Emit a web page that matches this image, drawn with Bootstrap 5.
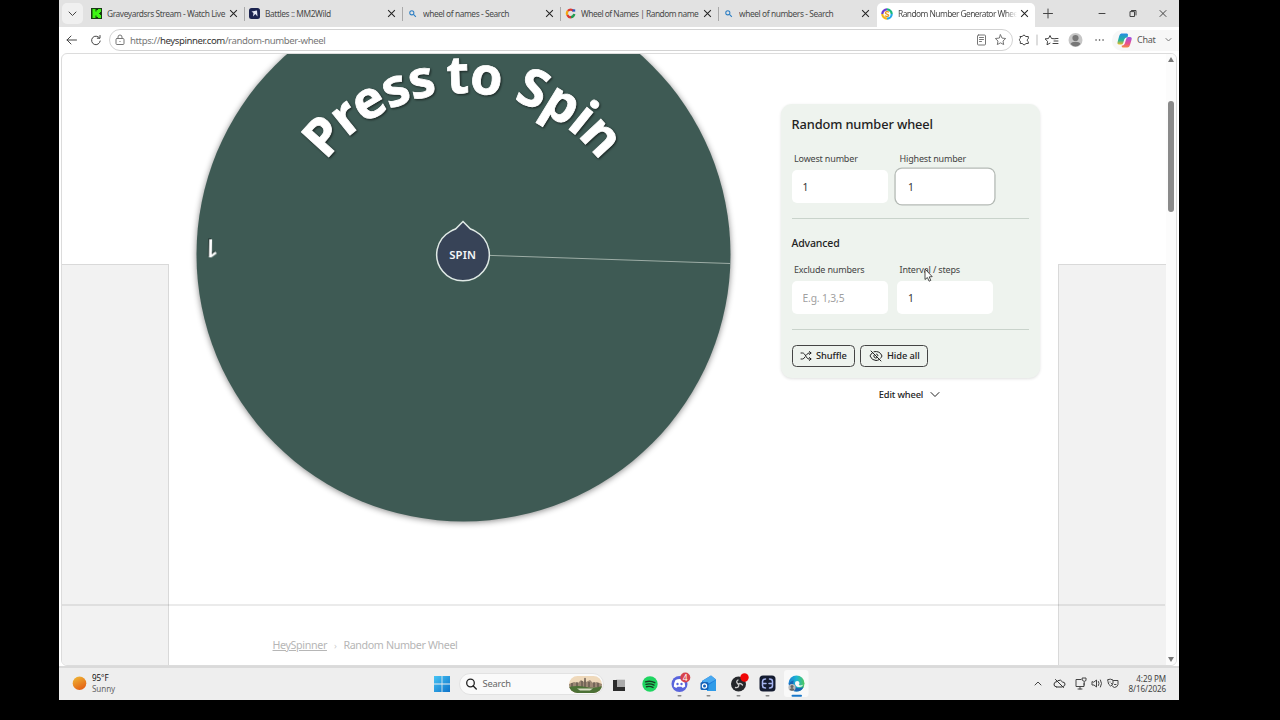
<!DOCTYPE html>
<html lang="en">
<head>
<meta charset="utf-8">
<title>Random Number Generator Wheel</title>
<link href="https://cdn.jsdelivr.net/npm/bootstrap@5.3.0/dist/css/bootstrap.min.css" rel="stylesheet">
<style>
body{background:#000;font-family:"Noto Sans","Open Sans",sans-serif;font-size:9px;line-height:1.2;color:#222;overflow:hidden;height:720px}
svg{display:block;flex:none}
.ic{fill:none;stroke:#444;stroke-width:1;stroke-linecap:round;stroke-linejoin:round}
.desktop{width:1120px;height:700px;margin-left:59px;background:#fff}
.tabstrip{height:27px;background:#e2e2e2}
.tab-menu{width:21px;height:21px;margin:3px 4px 3px 3px;background:#f0f0f0;border-radius:5px}
.wtab{width:158px;height:27px;padding-left:4px;color:#4a4a4a;font-size:8.4px;letter-spacing:-.42px}
.wtab .ttl{width:119px;margin-left:5px;margin-right:3px;overflow:hidden;white-space:nowrap;line-height:14px;padding-top:1px}
.wtab .tight{letter-spacing:-.5px}
.wtab .fade-end{-webkit-mask-image:linear-gradient(90deg,#000 90%,transparent)}
.wtab .sep{width:1px;height:14px;background:#a9a9a9}
.wtab.active{background:#fff;border-radius:5px 5px 0 0;height:24px;margin-top:3px;padding-bottom:3px}
.toolbar{height:26px;background:#fff}
.address{width:904px;height:22px;border:1px solid #d3d3d3;border-radius:11px;font-size:9.6px;line-height:14px;color:#777;letter-spacing:-.4px}
.address b{font-weight:400;color:#333}
.chat{width:67px;height:21px;background:#f7f7f7;border-radius:10px 0 0 10px;font-size:9px;color:#555;letter-spacing:-.3px}
.viewport{height:613px;margin:0 2px;width:1116px;border:1px solid #dcdcdc;border-radius:6px;overflow:hidden;background:#fff}
.ad{background:#f2f2f2;border:1px solid #d9d9d9;margin-top:210px;height:410px}
.rule{left:0;right:11px;top:550px;height:1.500px;background:#00000014}
.scroll{width:10px;background:#fcfcfc}
.thumb{width:6px;height:111px;margin-top:36px;background:#8a8a8a;border-radius:3px}
.panel{width:259px;height:274px;margin:50px 0 0 42px;padding:0 11px 0 10.5px;background:#eef3ee;border-radius:11px;box-shadow:0 1px 3px #0000001f}
.panel h1{font-size:12.8px;font-weight:500;margin:0;padding-top:12px;line-height:16px;letter-spacing:-.1px}
.panel h2{font-size:10.5px;font-weight:500;margin:17px 0 0;line-height:15px;letter-spacing:-.15px;color:#222}
.fld{width:96px;font-size:9px;color:#444;letter-spacing:-.17px}
.fld label{display:block;padding-left:2.5px;line-height:12px}
.fld .form-control{height:33px;border:0;border-radius:5px;padding:1px 11px 0;font-size:10.3px;color:#333;background:#fff;margin-top:5px;letter-spacing:-.15px}
.fld .form-control::placeholder{color:#a0a0a0}
.fld .hot{box-shadow:0 0 0 1.3px #fff,0 0 0 2.6px #b4bab5;}
.panel hr{margin:0;border-top:1px solid #c9d3cb;opacity:1}
.btn-w{height:22px;border:1px solid #444;border-radius:4.5px;padding:0 7px;font-size:9.3px;font-weight:500;color:#222;line-height:1;background:transparent;letter-spacing:-.08px;white-space:nowrap}
.edit{width:259px;margin-left:41px;margin-top:9px;font-size:9.3px;font-weight:500;letter-spacing:-.15px;height:15px}
.crumbs{height:61px;margin-left:103.5px;padding-top:33px;font-size:10.7px;color:#b6b6b6;letter-spacing:-.36px;line-height:15px}
.taskbar{height:34px;border-top:2px solid #dadada;background:#eee;color:#444;font-size:8.1px}
.search{width:145px;height:22px;background:#fafafa;border:1px solid #e2e2e2;border-radius:11px;font-size:9.3px;color:#666;letter-spacing:-.2px}
.app{width:29.4px;height:32px}
.cursor{left:924px;top:268px}
</style>
</head>
<body>
<svg width="0" height="0" class="position-absolute"><defs>
<symbol id="x" viewBox="0 0 8 8"><path d="M1 1l6 6M7 1L1 7" stroke="#222" stroke-width=".9"/></symbol>
<symbol id="mag" viewBox="0 0 8 8"><circle cx="3" cy="3" r="2.2" fill="none" stroke="#2d7fc4" stroke-width="1.1"/><path d="M4.7 4.7L7.4 7.4" stroke="#2d7fc4" stroke-width="1.2"/></symbol>
</defs></svg>
<div class="desktop d-flex flex-column">
  <div class="tabstrip d-flex">
    <div class="tab-menu d-flex align-items-center justify-content-center"><svg class="ic" width="9" height="6"><path d="M1 1l3.5 3.5L8 1"/></svg></div>
    <div class="wtab d-flex align-items-center"><svg width="11" height="11"><path d="M0 0h11v11H0z" fill="#173b12"/><path d="M1.500 1h3v2.500h1V2H7V1h3v3H9v1H8v1h1v1h1v3H7V9H5.500V7.500h-1V10h-3z" fill="#3df514"/></svg><div class="ttl">Graveyardsrs Stream - Watch Live</div><svg width="9" height="9"><use href="#x"/></svg><div class="sep ms-auto"></div></div>
    <div class="wtab d-flex align-items-center"><svg width="11" height="11"><rect width="11" height="11" rx="2.5" fill="#1c2450"/><path d="M2.500 3.500L8 2.500 8.500 8.500 6.300 6 4 8.500 4.500 5z" fill="#e5e9f5"/></svg><div class="ttl">Battles :: MM2Wild</div><svg width="9" height="9"><use href="#x"/></svg><div class="sep ms-auto"></div></div>
    <div class="wtab d-flex align-items-center"><svg width="11" height="8"><use href="#mag" x="2" width="7.5" height="7.5"/></svg><div class="ttl">wheel of names - Search</div><svg width="9" height="9"><use href="#x"/></svg><div class="sep ms-auto"></div></div>
    <div class="wtab d-flex align-items-center"><svg width="11" height="11" fill="none" stroke-width="2.3"><path d="M8.500 3A3.800 3.800 0 0 0 2.800 3" stroke="#e0392d"/><path d="M2.800 3a3.800 3.800 0 0 0-.5 4" stroke="#f3a712"/><path d="M2.300 7a3.800 3.800 0 0 0 4.500 2" stroke="#d83a31"/><path d="M6 9.200A4 4 0 0 0 9.300 6" stroke="#239b50"/><path d="M7.500 2.500h2.700" stroke="#2a56c6"/></svg><div class="ttl tight">Wheel of Names | Random name</div><svg width="9" height="9"><use href="#x"/></svg><div class="sep ms-auto"></div></div>
    <div class="wtab d-flex align-items-center"><svg width="11" height="8"><use href="#mag" x="2" width="7.5" height="7.5"/></svg><div class="ttl">wheel of numbers - Search</div><svg width="9" height="9"><use href="#x"/></svg></div>
    <div class="wtab active d-flex align-items-center"><svg width="12" height="12" fill="none" stroke-width="2.2"><path d="M6 1.300A4.700 4.700 0 0 1 10.700 6" stroke="#19b77e"/><path d="M10.700 6A4.700 4.700 0 0 1 6 10.700" stroke="#28a9e8"/><path d="M6 10.700A4.700 4.700 0 0 1 1.300 6" stroke="#f3b51b"/><path d="M1.300 6A4.700 4.700 0 0 1 6 1.300" stroke="#6b3fd0"/><path d="M8 4.200C6.500 3 4 3.800 4.500 5.200S8 6 7.700 7.400 5 8.800 3.800 7.600" stroke="#e89a20" stroke-width="1.3"/></svg><div class="ttl tight fade-end" style="letter-spacing:-.55px">Random Number Generator Whee</div><svg width="9" height="9"><use href="#x"/></svg></div>
    <div class="d-flex align-items-center flex-grow-1"><svg class="ic" width="144" height="27" stroke="#333"><path d="M8.500 13.500h9M13 9v9M64 13.500h6M95 12v4.500h4.500V12zM96.500 10.500h4.500v4.500M125 10.500l6 6M131 10.500l-6 6"/></svg></div>
  </div>

  <div class="toolbar d-flex align-items-center">
    <svg class="ic" width="50" height="26"><path d="M8 13h9.500M12 9l-4 4 4 4M40.500 11a4.300 4.300 0 1 0 .7 3M41 8.500v2.700h-2.700"/></svg>
    <div class="address d-flex align-items-center">
      <svg class="ic" width="20" height="20" style="flex:0 0 20px;stroke:#777"><rect x="6" y="8.500" width="8" height="6" rx="1"/><path d="M8 8.500V7a2 2 0 0 1 4 0v1.500M9.900 11.500h.2"/></svg>
      <div class="flex-grow-1" style="padding-top:1px">https://<b>heyspinner.com</b>/random-number-wheel</div>
      <svg class="ic" width="46" height="20" style="stroke:#777"><rect x="11.500" y="5" width="8" height="10" rx="1"/><path d="M13.500 7.500h4M13.500 9.500h4M13.500 11.500h2M34.500 4.800l1.500 3.300 3.700.4-2.700 2.500.7 3.600-3.200-1.800-3.200 1.800.7-3.600-2.700-2.500 3.700-.4z"/></svg>
    </div>
    <svg class="ic" width="92" height="26"><g transform="translate(-10.500)"><path d="M14 10h2a1.700 1.700 0 0 1 3.300 0H22v2.200a1.600 1.600 0 0 0 0 3V17h-2.500a1.700 1.700 0 0 1-3.300 0H14v-2.300a1.700 1.700 0 0 1 0-3z" transform="translate(3.800 -.5)"/><path d="M34.500 8v10" stroke="#bbb"/><path d="M52.500 11.800l-3.500-.3-1.500-3-1.500 3-3.500.4 2.600 2.400-.6 3.500 3-1.700M51.500 14h4M50.500 16.500h5M53 11.500h2.500"/><circle cx="73" cy="13" r="7" fill="#c6c6c6" stroke="none"/><circle cx="73" cy="11" r="3.100" fill="#777" stroke="none"/><path d="M68 17c1-3 9-3 10 0q-5 5-10 0" fill="#777" stroke="none"/><path d="M93.500 13h.1M97 13h.1M100.500 13h.1" stroke-width="1.500"/></g></svg>
    <div class="chat d-flex align-items-center ms-auto">
      <svg width="25" height="20"><defs><linearGradient id="c1" x2="0" y2="1"><stop stop-color="#258be5"/><stop offset=".6" stop-color="#23b69b"/><stop offset="1" stop-color="#f0bb20"/></linearGradient><linearGradient id="c2" x2="0" y2="1"><stop stop-color="#9a55e8"/><stop offset=".6" stop-color="#e84e91"/><stop offset="1" stop-color="#f58c43"/></linearGradient></defs><g transform="translate(.8)"><path d="M8.500 3.500h5.500q1.500 0 1.200 1.500l-.4 2.500q-2.500-.5-3.400 2l-1 3.500q-.5 1.500-2.200 1.500h-2q-2 0-1.400-2.500l1.600-6q.7-2.500 2.100-2.500z" fill="url(#c1)"/><path d="M15.500 7h1.700q2.300 0 1.600 2.500l-1.600 5.500q-.7 2.500-2.700 2.500H10q-1.500 0-1-2 2 .5 3-2l1.400-4.500q.6-2 2.100-2z" fill="url(#c2)"/></g></svg>
      <span>Chat</span><svg class="ic ms-auto" width="9" height="6" style="stroke:#777;margin-right:6.500px"><path d="M2 1.500l2.500 2.500L7 1.500"/></svg>
    </div>
  </div>

  <div class="viewport position-relative d-flex">
    <div class="ad border-start-0 border-bottom-0" style="width:107px"></div>
    <main class="flex-grow-1">
      <div class="d-flex" style="height:551px">
        <svg width="550" height="551" viewBox="189 54 550 551" style="margin-left:20px">
          <circle cx="463.500" cy="254.500" r="267" fill="#3e5a54" style="filter:drop-shadow(0 1px 3px #0007)"/>
          <path d="M463 254.500L730.300 263.500" stroke="#9dada6" stroke-width="1"/>
          <path id="arc" d="M291 265A172 172 0 0 1 635 265" fill="none"/>
          <text fill="#fff" stroke="#fff" stroke-width=".8" font-size="52" font-weight="700" letter-spacing="-1.200" style="filter:drop-shadow(1.500px 1.500px 1px #0009)"><textPath href="#arc" startOffset="112">Press <tspan dx="-2">to</tspan> <tspan dx="2">Spin</tspan></textPath></text>
          <text transform="translate(219 239.500) rotate(181)" fill="#fff" font-size="26" font-weight="500" style="filter:drop-shadow(1px 1px .5px #0006)">1</text>
          <path d="M463 221.500L470.500 229Q473 230 475.500 231.300A26.300 26.300 0 1 1 450.500 231.300Q453 230 455.500 229Z" fill="#374357" stroke="#dfe9e5" stroke-width="1.500"/>
          <text x="462.700" y="258.500" text-anchor="middle" font-size="11.300" font-weight="600" letter-spacing=".15" fill="#f4f7f7">SPIN</text>
        </svg>
        <div>
          <section class="panel d-flex flex-column">
            <h1>Random number wheel</h1>
            <div class="d-flex" style="gap:9.500px;margin-top:21px">
              <div class="fld"><label>Lowest number</label><input class="form-control" value="1"></div>
              <div class="fld"><label>Highest number</label><input class="form-control hot" value="1"></div>
            </div>
            <hr style="margin-top:15px">
            <h2>Advanced</h2>
            <div class="d-flex" style="gap:9.500px;margin-top:13px">
              <div class="fld"><label>Exclude numbers</label><input class="form-control" placeholder="E.g. 1,3,5"></div>
              <div class="fld"><label>Interval / steps</label><input class="form-control" value="1"></div>
            </div>
            <hr style="margin-top:15px">
            <div class="d-flex" style="gap:5px;margin-top:15px">
              <button class="btn btn-w d-flex align-items-center" style="width:63px"><svg class="ic" width="12" height="10" style="stroke:#222;margin-right:4.500px"><path d="M1 2h1.500C5.500 2 6 8 9 8h2M1 8h1.500Q4 8 5 6M6.500 4Q7.500 2 9 2h2M9.500.5L11 2 9.500 3.500M9.500 6.500L11 8 9.500 9.500"/></svg>Shuffle</button>
              <button class="btn btn-w d-flex align-items-center" style="width:68.500px;padding:0 0 0 8px"><svg class="ic" width="14" height="12" style="stroke:#222;margin-right:4.500px"><path d="M2 1l10 10M3.500 2.800Q1.500 4 1 6q2 4.500 6 4.500 1.700 0 3-.8M5 1.700q6-1.200 8 4.300-.5 1.300-1.500 2.300M5.500 4.500a2 2 0 0 0 2.800 3M7.500 4q1.500.3 1.500 1.700"/></svg>Hide all</button>
            </div>
          </section>
          <div class="edit d-flex align-items-center justify-content-center">Edit wheel<svg class="ic" width="10" height="7" style="stroke:#222;margin-left:7px"><path d="M1 1.500l4 4 4-4"/></svg></div>
        </div>
      </div>
      <div class="crumbs"><u>HeySpinner</u><span style="margin:0 7px;font-size:9px;color:#ccc">›</span>Random Number Wheel</div>
    </main>
    <div class="ad border-end-0 border-bottom-0" style="width:108px"></div>
    <div class="scroll d-flex flex-column align-items-center"><svg width="6" height="11"><path d="M0 8L3 3l3 5z" fill="#777"/></svg><div class="thumb"></div><svg class="mt-auto" width="6" height="10"><path d="M0 2L3 7l3-5z" fill="#777"/></svg></div>
    <div class="rule position-absolute"></div>
  </div>

  <footer class="taskbar d-flex align-items-center mt-auto">
    <svg width="33" height="32"><defs><linearGradient id="sun" x1=".2" x2=".7" y2="1"><stop stop-color="#efb536"/><stop offset="1" stop-color="#e35c12"/></linearGradient></defs><circle cx="20.500" cy="15.300" r="6.800" fill="url(#sun)"/></svg>
    <div style="line-height:10.700px;width:342px;letter-spacing:-.1px"><div style="color:#111">95°F</div><div style="color:#666">Sunny</div></div>
    <svg width="16" height="16"><defs><linearGradient id="wn" x2="1" y2="1"><stop stop-color="#47c5f5"/><stop offset="1" stop-color="#0d72c9"/></linearGradient></defs><path d="M0 0h7.600v7.600H0zM8.400 0H16v7.600H8.400zM0 8.400h7.600V16H0zM8.400 8.400H16V16H8.400z" fill="url(#wn)"/></svg>
    <div class="search d-flex align-items-center" style="margin-left:9px"><svg class="ic" width="22.500" height="20" style="stroke:#222;stroke-width:1.300"><circle cx="10.500" cy="9" r="3.800"/><path d="M13.300 12l3 3"/></svg><span>Search</span>
      <svg class="ms-auto" width="33" height="17" style="margin-right:1px"><defs><clipPath id="pill"><rect width="33" height="17" rx="8.500"/></clipPath></defs><g clip-path="url(#pill)"><path d="M0 0h33v17H0z" fill="#efd9bb"/><path d="M0 8l5-2 4 1 3-3 3 2 1-5 1 5 4-2 3 3 4-1 5 2v9H0z" fill="#9c8874"/><path d="M3 7v4M8 6v5M13 5v6M16 2v9M20 6v5M25 6v5M29 7v4" stroke="#4f453f"/><path d="M0 11q9-2 17 0t16-1v7H0z" fill="#4c7136"/><path d="M8 12.500h16l-3 2H11z" fill="#d7dcc2"/></g></svg></div>
    <div class="app d-flex align-items-center justify-content-center"><svg width="14" height="14" class="mt-1"><path d="M4 0h9v9H4z" fill="#d9d9d9"/><path d="M1 1h4v7h8v4H1z" fill="#2b2b2b"/><path d="M5 1h8v7H5z" fill="#aaa"/></svg></div>
    <div class="app d-flex align-items-center justify-content-center" style="margin-left:2px"><svg width="16" height="16"><circle cx="8" cy="8" r="7.700" fill="#1fd561"/><path d="M3.500 5.800q5-1.500 9.300.9M4 8.300q4.300-1.200 8 .8M4.500 10.700q3.500-.9 6.500.7" class="ic" style="stroke:#173b22;stroke-width:1.400"/></svg></div>
    <div class="app"><svg width="30" height="32"><circle cx="14.500" cy="16" r="8" fill="#5964dc"/><path transform="translate(0 .5)" d="M10.500 11.500q4-1.800 8 0 2 3.500 1.700 6.500-1.500 1.300-3 1.300l-.7-1h-4l-.7 1q-1.500 0-3-1.300-.3-3 1.700-6.500z" fill="#fff"/><circle cx="12.500" cy="16" r="1.200" fill="#5964dc"/><circle cx="16.500" cy="16" r="1.200" fill="#5964dc"/><circle cx="20.300" cy="9.500" r="5" fill="#d8434c"/><text x="20.300" y="12.500" font-size="8.500" fill="#fff" text-anchor="middle">4</text><rect x="12.500" y="27" width="4" height="1.600" rx=".8" fill="#888"/></svg></div>
    <div class="app"><svg width="30" height="32"><g transform="translate(0 1)"><path d="M8 12l9-5.500 5 4v10.500H8z" fill="#1b7bdc"/><path d="M8 12l9-5.500 5 4-9 5z" fill="#48a8ef"/><path d="M22 11l-9 6v5h9z" fill="#2f9be8"/><rect x="6.500" y="13" width="8" height="8" rx="1.500" fill="#1561b8"/><circle cx="10.500" cy="17" r="2.100" fill="none" stroke="#fff" stroke-width="1.200"/></g><rect x="12.500" y="27" width="4" height="1.600" rx=".8" fill="#888"/></svg></div>
    <div class="app"><svg width="30" height="32"><g transform="translate(0 1)"><circle cx="14.500" cy="15" r="7.500" fill="#25272b"/><path d="M14 11q-2.500 1.500-.2 3.700M18.500 16q-2-2.500-4.500-.8M11.500 18.500q3.500.5 3.300-3" class="ic" style="stroke:#ccc;stroke-width:1.300"/></g><circle cx="20.500" cy="9.500" r="4.200" fill="#f00505"/><rect x="12.500" y="27" width="4" height="1.600" rx=".8" fill="#888"/></svg></div>
    <div class="app"><svg width="30" height="32"><g transform="translate(0 1)"><rect x="6.500" y="6.500" width="16" height="16" rx="3.500" fill="#141b30"/><path d="M12.500 10q-3 0-3 2.500v4q0 2.500 3 2.500M16.500 10q3 0 3 2.500v4q0 2.500-3 2.500M9.500 14.500h3.500M16 14.500h3.500" class="ic" style="stroke:#a6b5f0;stroke-width:1.500"/></g><rect x="12.500" y="27" width="4" height="1.600" rx=".8" fill="#888"/></svg></div>
    <div class="app"><svg width="30" height="32"><defs><linearGradient id="ed" x2="1"><stop stop-color="#1c7fd4"/><stop offset=".5" stop-color="#1cb5d4"/><stop offset="1" stop-color="#4ec75a"/></linearGradient></defs><rect x="2" y="2" width="24.500" height="27" rx="3" fill="#f9f9f9"/><g transform="translate(0 1)"><circle cx="14.500" cy="14.500" r="8" fill="url(#ed)"/><path d="M7 17q0-5 5-5.500-2 3 1 6t8.500.5q-2 4.500-7 4.500T7 17z" fill="#1764b4"/><path d="M13 14q0-2 2.200-2T17.500 14q0 1-.8 2 2 1 4.700-.5-1.500 2.800-4.900 2.500T13 14z" fill="#f9f9f9"/><circle cx="10" cy="18.500" r="3.600" fill="#bcbcbc"/><circle cx="10" cy="17.500" r="1.500" fill="#666"/><path d="M7.500 20.500q2.500-3 5 0-2.500 2.500-5 0" fill="#666"/></g><rect x="9.500" y="26.700" width="10.500" height="2" rx="1" fill="#1877c9"/></svg></div>
    <svg class="ic ms-auto" width="98" height="32"><path d="M10 17l3-3 3 3"/><path d="M30.500 11.500l8 8M31.500 19H37M31.500 19q-3-.5-2.500-3t3-2.500M33 12.500q3-1.500 4.500 1.500 2.300 0 2.500 2t-1.700 2.500" stroke="#333"/><path d="M56 11.500h-5v7h8v-3M53 21h4M55 18.500v2.500M57.500 10h3.500v2.500q-1.700 2-3.500 0zM59.200 14v3"/><path d="M67 14v3h2l2.500 2v-7L69 14zM73.500 13.500q1.200 2 0 4M75.500 12q2.200 3.500 0 7"/><path d="M83 11.500q2.500-1 5 .5v3q-.5 2.500-2.500 3-2.500-1.500-2.500-4zM88.500 12.500h4.500v4q-.5 2.500-3.500 3-1.800-.5-2.700-2M85 14h.1M86.500 15.500h.1M89.500 16.500h1.500"/></svg>
    <div class="text-end" style="line-height:10.500px;margin-left:3.500px;margin-right:13px;width:40px;white-space:nowrap;direction:rtl;letter-spacing:-.1px"><bdi dir="ltr">4:29 PM</bdi><br><bdi dir="ltr">8/16/2026</bdi></div>
  </footer>
</div>
<svg class="cursor position-absolute" width="9" height="15"><path d="M1 1v10.500l2.400-2 1.700 3.700 1.700-.8-1.600-3.500 3-.3z" fill="#fff" stroke="#222" stroke-width=".8"/></svg>
<script src="https://cdn.jsdelivr.net/npm/bootstrap@5.3.0/dist/js/bootstrap.bundle.min.js"></script>
</body>
</html>
